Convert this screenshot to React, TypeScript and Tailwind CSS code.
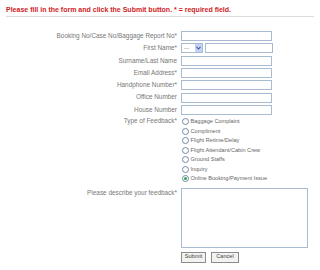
const font = { fontFamily: '"Liberation Sans", Arial, sans-serif' }

const textFields = [
  "Booking No/Case No/Baggage Report No*",
  "First Name*",
  "Surname/Last Name",
  "Email Address*",
  "Handphone Number*",
  "Office Number",
  "House Number",
]

const feedbackTypes = [
  "Baggage Complaint",
  "Compliment",
  "Flight Retime/Delay",
  "Flight Attendant/Cabin Crew",
  "Ground Staffs",
  "Inquiry",
  "Online Booking/Payment Issue",
]

function Radio({ checked }: { checked?: boolean }) {
  return (
    <span className="flex h-[7px] w-[7px] shrink-0 items-center justify-center rounded-full border border-[#6f8aa8] bg-white">
      {checked && <span className="h-[3px] w-[3px] rounded-full bg-[#2fa34a]" />}
    </span>
  )
}

function NameSelect() {
  return (
    <div className="flex h-[10px] w-[22px] items-center justify-between border border-[#a9bbd0] bg-white pl-[2px]">
      <span className="text-[5px] leading-none text-[#777]">---</span>
      <span className="flex h-[8px] w-[7px] items-center justify-center bg-[#c3d3f1]">
        <svg width="5" height="4" viewBox="0 0 5 4">
          <path d="M0.5 0.8 L2.5 3 L4.5 0.8" fill="none" stroke="#3b5ea8" strokeWidth="1.1" />
        </svg>
      </span>
    </div>
  )
}

export default function App() {
  return (
    <div className="h-[270px] w-[320px] bg-white" style={font}>
      <div className="px-[6px] pt-[5px]">
        <p className="text-[7px] font-bold leading-[10px] text-[#d01c1c]">
          Please fill in the form and click the Submit button. * = required field.
        </p>
        <div className="mt-px h-px bg-[#dcdcdc]" />
      </div>

      <div className="mt-[13px] text-[6.4px] text-[#777]">
        {textFields.map((label, i) => (
          <div key={label} className="flex h-[12.3px] items-center">
            <span className="w-[179px] pr-[2px] text-right leading-none">{label}</span>
            {i === 1 ? (
              <div className="ml-[2px] flex items-center gap-[2px]">
                <NameSelect />
                <div className="h-[10px] w-[68px] border border-[#a9bbd0] bg-white" />
              </div>
            ) : (
              <div className="ml-[2px] h-[10px] w-[91px] border border-[#a9bbd0] bg-white" />
            )}
          </div>
        ))}

        <div className="mt-[1px] flex">
          <span className="w-[179px] pr-[2px] pt-[1px] text-right leading-none">Type of Feedback*</span>
          <div className="ml-[3px] flex flex-col">
            {feedbackTypes.map((t, i) => (
              <div key={t} className="flex h-[9.5px] items-center gap-[1.5px]">
                <Radio checked={i === feedbackTypes.length - 1} />
                <span className="text-[5.6px] leading-none text-[#666]">{t}</span>
              </div>
            ))}
          </div>
        </div>

        <div className="mt-[4px] flex">
          <span className="w-[179px] pr-[2px] pt-[2px] text-right leading-none">Please describe your feedback*</span>
          <div className="ml-[2px] flex flex-col">
            <div className="h-[60px] w-[127px] border border-[#a9bbd0] bg-white" />
            <div className="mt-[4px] flex gap-[5px]">
              <button className="h-[11px] w-[25px] border border-[#8c8c8c] bg-[#f2f2f0] text-[5.6px] leading-none text-[#444]">
                Submit
              </button>
              <button className="h-[11px] w-[28px] border border-[#8c8c8c] bg-[#f2f2f0] text-[5.6px] leading-none text-[#444]">
                Cancel
              </button>
            </div>
          </div>
        </div>
      </div>
    </div>
  )
}
